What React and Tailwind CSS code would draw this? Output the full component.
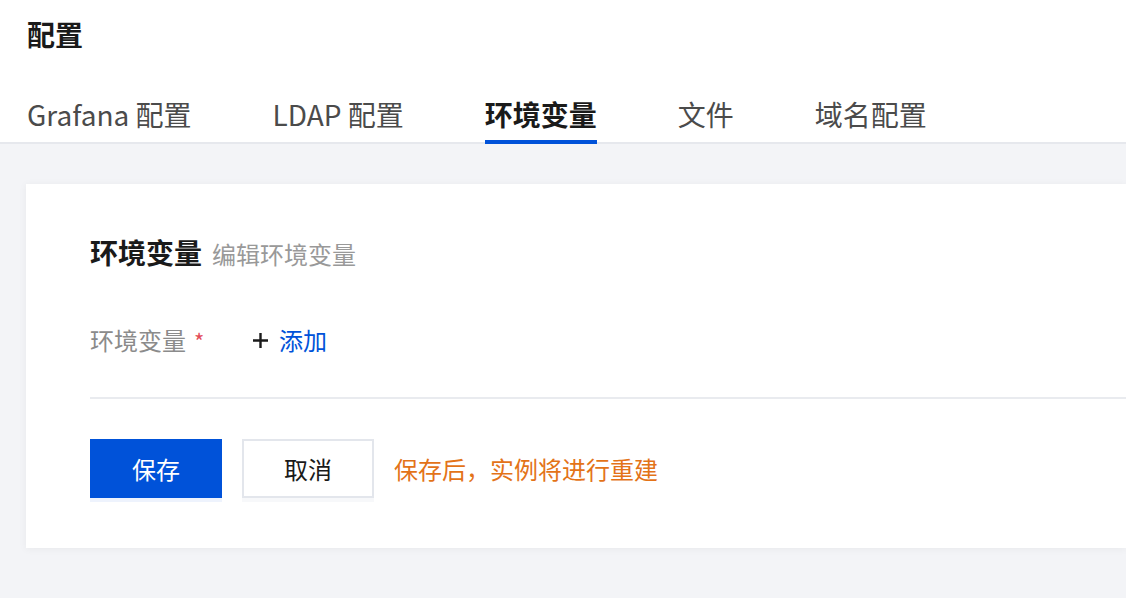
import { useState } from 'react';

const tabs = ['Grafana 配置', 'LDAP 配置', '环境变量', '文件', '域名配置'];

const PlusIcon = () => (
  <svg width="17" height="17" viewBox="0 0 17 17" fill="none">
    <path d="M8.5 1v15M1 8.5h15" stroke="#1a1a1a" strokeWidth="2.4" />
  </svg>
);

const App = () => {
  const [active, setActive] = useState(2);

  return (
    <div
      className="min-h-[598px] bg-[#f3f4f7] text-[#1a1a1a]"
      style={{ fontFamily: '"Noto Sans CJK SC", "Noto Sans", sans-serif' }}
    >
      {/* header + tabs */}
      <div className="bg-white pl-[27px]">
        <h1 className="pt-[14px] text-[28px] leading-[40px] font-bold text-[#1a1a1a]">配置</h1>
        <nav className="mt-[40px] flex gap-[81px] border-b-2 border-[#e6e8ed] -ml-[27px] pl-[27px]">
          {tabs.map((t, i) => (
            <button
              key={t}
              onClick={() => setActive(i)}
              className={
                i === active
                  ? '-mb-[2px] border-b-4 border-[#0052d9] pb-[6px] text-[28px] leading-[40px] font-bold text-[#1a1a1a]'
                  : '-mb-[2px] border-b-4 border-transparent pb-[6px] text-[28px] leading-[40px] text-[#4b4b4b]'
              }
            >
              {t}
            </button>
          ))}
        </nav>
      </div>

      {/* card */}
      <div className="pt-[40px]">
        <div className="ml-[26px] bg-white pl-[64px] pt-[50px] pb-[50px] shadow-[0_1px_8px_rgba(0,0,0,0.05)]">
          <div className="flex items-baseline gap-[10px]">
            <h2 className="text-[28px] leading-[36px] font-bold text-[#1a1a1a]">环境变量</h2>
            <span className="text-[24px] leading-[36px] text-[#999999]">编辑环境变量</span>
          </div>

          <div className="mt-[52px] flex items-center">
            <div className="flex w-[162px] items-center">
              <span className="text-[24px] leading-[32px] text-[#8b8b8b]">环境变量</span>
              <span className="ml-[8px] text-[22px] leading-[32px] text-[#e34d59]">*</span>
            </div>
            <button className="flex items-center gap-[10px]">
              <PlusIcon />
              <span className="text-[24px] leading-[32px] text-[#0052d9]">添加</span>
            </button>
          </div>

          <div className="mt-[41px] h-[2px] bg-[#e9ebef]" />

          <div className="mt-[40px] flex items-center gap-[20px]">
            <button className="h-[59px] w-[132px] bg-[#0052d9] text-[24px] text-white shadow-[0_4px_0_#eef3fd]">
              保存
            </button>
            <button className="h-[59px] w-[132px] border-2 border-[#e3e6ec] bg-white text-[24px] text-[#1a1a1a] shadow-[0_4px_0_#f7f8fa]">
              取消
            </button>
            <span className="text-[24px] leading-[32px] text-[#e37318]">保存后，实例将进行重建</span>
          </div>
        </div>
      </div>
    </div>
  );
};

export default App;
